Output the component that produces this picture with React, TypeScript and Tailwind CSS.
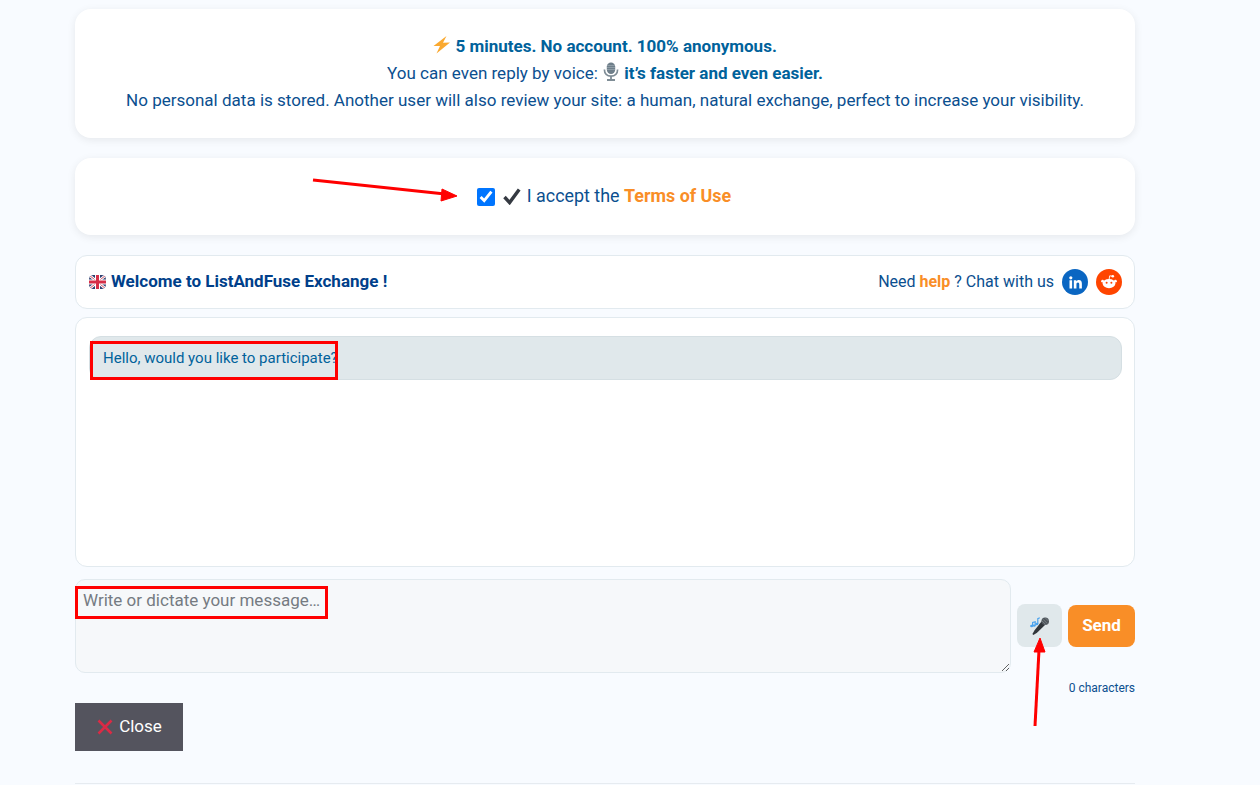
import React from "react";

const Bolt = () => (
  <svg viewBox="0 0 18 18" className="inline-block w-[18px] h-[18px] align-[-1.5px] -mt-[2px]">
    <path d="M13.5 0 L0.5 10 L7 10 L3.5 17.5 L17 6.6 L10 6.8 Z" fill="#faa930" />
  </svg>
);

const Mic = () => (
  <svg viewBox="0 0 16 19" className="inline-block w-[16px] h-[19px] align-[-2px] -mt-[2px] mx-[1px]">
    <rect x="3.8" y="0.4" width="8.4" height="11.6" rx="4.2" fill="#6f7f8a" />
    <path d="M4 3.5h8M4 5.5h8M4 7.5h8" stroke="#98a5ad" strokeWidth="0.8" />
    <path d="M1.4 7.6c0 4 2.6 6.6 6.6 6.6s6.6-2.6 6.6-6.6" fill="none" stroke="#7f8d96" strokeWidth="1.7" />
    <path d="M8 14v3.4M4 18h8" stroke="#7f8d96" strokeWidth="1.8" />
  </svg>
);

const Flag = () => (
  <svg viewBox="0 0 17 14" className="w-[17px] h-[14px]">
    <defs>
      <clipPath id="flagc"><rect x="0" y="0" width="17" height="14" rx="4.5" /></clipPath>
    </defs>
    <g clipPath="url(#flagc)">
      <rect x="0" y="0" width="17" height="14" fill="#2d3f70" />
      <path d="M0 0 17 14M17 0 0 14" stroke="#fff" strokeWidth="2.8" />
      <path d="M0 0 17 14M17 0 0 14" stroke="#d13a50" strokeWidth="0.9" />
      <path d="M8.5 0v14M0 7h17" stroke="#fff" strokeWidth="5" />
      <path d="M8.5 0v14M0 7h17" stroke="#d62f48" strokeWidth="3" />
    </g>
  </svg>
);

const Check = () => (
  <svg viewBox="0 0 18 17" className="w-[18px] h-[17px]">
    <path d="M1.5 9 L6.6 14.6 L16.2 1.4" fill="none" stroke="#353a42" strokeWidth="3.4" strokeLinejoin="miter" />
  </svg>
);

const Linked = () => (
  <span className="w-[26px] h-[26px] rounded-full bg-[#0a66c2] flex items-center justify-center">
    <svg viewBox="0 0 16 16" className="w-[15px] h-[15px]" fill="#fff">
      <circle cx="3" cy="3" r="1.7" />
      <rect x="1.6" y="5.6" width="2.8" height="8.8" />
      <path d="M6.2 5.6h2.6v1.2c.5-.8 1.5-1.4 2.8-1.4 2.4 0 3.2 1.5 3.2 3.9v5.1h-2.8V9.9c0-1.1-.3-2-1.4-2-1.2 0-1.6.9-1.6 2v4.5H6.2z" />
    </svg>
  </span>
);

const Reddit = () => (
  <span className="w-[26px] h-[26px] rounded-full bg-[#ff4500] flex items-center justify-center">
    <svg viewBox="0 0 18 18" className="w-[18px] h-[18px]">
      <ellipse cx="9" cy="10.6" rx="6.4" ry="4.6" fill="#fff" />
      <circle cx="2.6" cy="8.2" r="1.4" fill="#fff" />
      <circle cx="15.4" cy="8.2" r="1.4" fill="#fff" />
      <circle cx="12.8" cy="3.2" r="1.3" fill="#fff" />
      <path d="M9 7 9.7 2.8 12.4 3.2" fill="none" stroke="#fff" strokeWidth="0.9" />
      <circle cx="6.6" cy="9.8" r="1" fill="#ff4500" />
      <circle cx="11.4" cy="9.8" r="1" fill="#ff4500" />
    </svg>
  </span>
);

const MicNotes = () => (
  <svg viewBox="0 0 20 20" className="w-[20px] h-[20px]">
    <path d="M2.6 10V6.4l2.6-.6V9.6M7.8 8V2.6l2-.8" fill="none" stroke="#4aa3ee" strokeWidth="1.2" />
    <ellipse cx="1.6" cy="10" rx="1.5" ry="1.2" fill="#4aa3ee" />
    <ellipse cx="4.2" cy="9.6" rx="1.5" ry="1.2" fill="#4aa3ee" />
    <ellipse cx="6.8" cy="8" rx="1.5" ry="1.2" fill="#4aa3ee" />
    <path d="M11.5 5.5 L15 9 L7 16.8 L3.4 19 L2.4 18 L4.6 14.2 Z" fill="#30353a" />
    <circle cx="15.2" cy="5.2" r="3.8" fill="#50575d" />
    <path d="M13 3.2l4.2 4.2M15 1.6l3.4 3.4M12 5l3.6 3.6" stroke="#8b9399" strokeWidth="0.6" />
  </svg>
);

const X = () => (
  <svg viewBox="0 0 16 16" className="w-[16px] h-[16px]">
    <path d="M1.5 1.5 14.5 14.5M14.5 1.5 1.5 14.5" stroke="#dc2a45" strokeWidth="2.6" />
  </svg>
);

export default function App() {
  return (
    <div className="relative h-[785px] overflow-hidden bg-[#f8fbff] font-['Roboto',sans-serif]">
      <div className="w-[1060px] ml-[75px] pt-[9px] flex flex-col">
        <div className="h-[129px] bg-white rounded-[16px] shadow-[0_2px_8px_rgba(0,0,0,0.08)] flex flex-col items-center justify-center text-[17.02px] leading-[27px] text-[#0b4f8f]">
          <p className="text-[#00629b]"><Bolt /> <strong className="font-bold">5 minutes. No account. 100% anonymous.</strong></p>
          <p>You can even reply by voice: <Mic /> <strong className="font-bold text-[#00629b]">it’s faster and even easier.</strong></p>
          <p>No personal data is stored. Another user will also review your site: a human, natural exchange, perfect to increase your visibility.</p>
        </div>

        <div className="mt-[20px] h-[77px] bg-white rounded-[16px] shadow-[0_2px_8px_rgba(0,0,0,0.08)] flex items-center justify-center pr-[2px] text-[17.9px] text-[#0b4f8f]">
          <input type="checkbox" defaultChecked className="w-[18px] h-[18px] accent-[#0075ff]" />
          <span className="ml-[8px] mr-[6px] flex"><Check /></span>
          <span className="-mt-[1px]">I accept the <strong className="font-bold text-[#f98e27]">Terms of Use</strong></span>
        </div>

        <div className="mt-[20px] h-[54px] bg-white rounded-[12px] border border-[#e2eaef] flex items-center justify-between pl-[13px] pr-[12px]">
          <div className="flex items-center gap-[5px] text-[#003f8a] font-bold text-[17px]">
            <Flag />
            <span>Welcome to ListAndFuse Exchange !</span>
          </div>
          <div className="flex items-center gap-[8px] text-[16px] text-[#0b4f8f]">
            <span>Need <strong className="font-bold text-[#f98e27]">help</strong> ? Chat with us</span>
            <Linked />
            <Reddit />
          </div>
        </div>

        <div className="mt-[8px] h-[250px] bg-white rounded-[12px] border border-[#e2eaef] pt-[18px] pl-[13px] pr-[12px]">
          <div className="h-[44px] bg-[#e0e8eb] rounded-[12px] border border-[#d5dfe3] flex items-center pl-[13px] pr-[12px] text-[15px] text-[#00629b]">
            Hello, would you like to participate?
          </div>
        </div>

        <div className="mt-[12px] h-[94px] flex items-start">
          <textarea
            placeholder="Write or dictate your message…"
            className="block w-[936px] h-[94px] bg-[#f6f8fa] rounded-[10px] border border-[#e2eaef] px-[7px] py-[8px] text-[17px] placeholder:text-[#757b82] outline-none"
          />
          <div className="ml-[6px] mt-[25px] w-[118px]">
            <div className="flex items-center gap-[6px]">
              <button className="w-[45px] h-[43px] rounded-[8px] bg-[#e0e8eb] flex items-center justify-center"><MicNotes /></button>
              <button className="w-[67px] h-[42px] rounded-[8px] bg-[#f98e27] text-white font-bold text-[17px]">Send</button>
            </div>
            <div className="mt-[34px] text-right text-[12px] leading-[14px] text-[#0b4f8f]">0 characters</div>
          </div>
        </div>

        <button className="mt-[30px] w-[108px] h-[48px] bg-[#54545e] text-white text-[17px] flex items-center justify-center gap-[6px] pl-[1px]">
          <X />
          <span>Close</span>
        </button>

        <div className="mt-[32px] h-px bg-[#e6ebf0]" />
      </div>

      {/* annotations */}
      <div className="absolute left-[90px] top-[341px] w-[248px] h-[39px] border-[3px] border-[#ff0000]" />
      <div className="absolute left-[75px] top-[586px] w-[253px] h-[33px] border-[3px] border-[#ff0000]" />
      <svg className="absolute left-0 top-0 pointer-events-none" width="1260" height="785">
        <path d="M313 180 L445 194" stroke="#ff0000" strokeWidth="3" />
        <path d="M457 196 L442 189 L441 201 Z" fill="#ff0000" stroke="#ff0000" strokeWidth="1" />
        <path d="M1035 726 L1039 650" stroke="#ff0000" strokeWidth="3" />
        <path d="M1040 638 L1034 652 L1045 652 Z" fill="#ff0000" stroke="#ff0000" strokeWidth="1" />
      </svg>
    </div>
  );
}
